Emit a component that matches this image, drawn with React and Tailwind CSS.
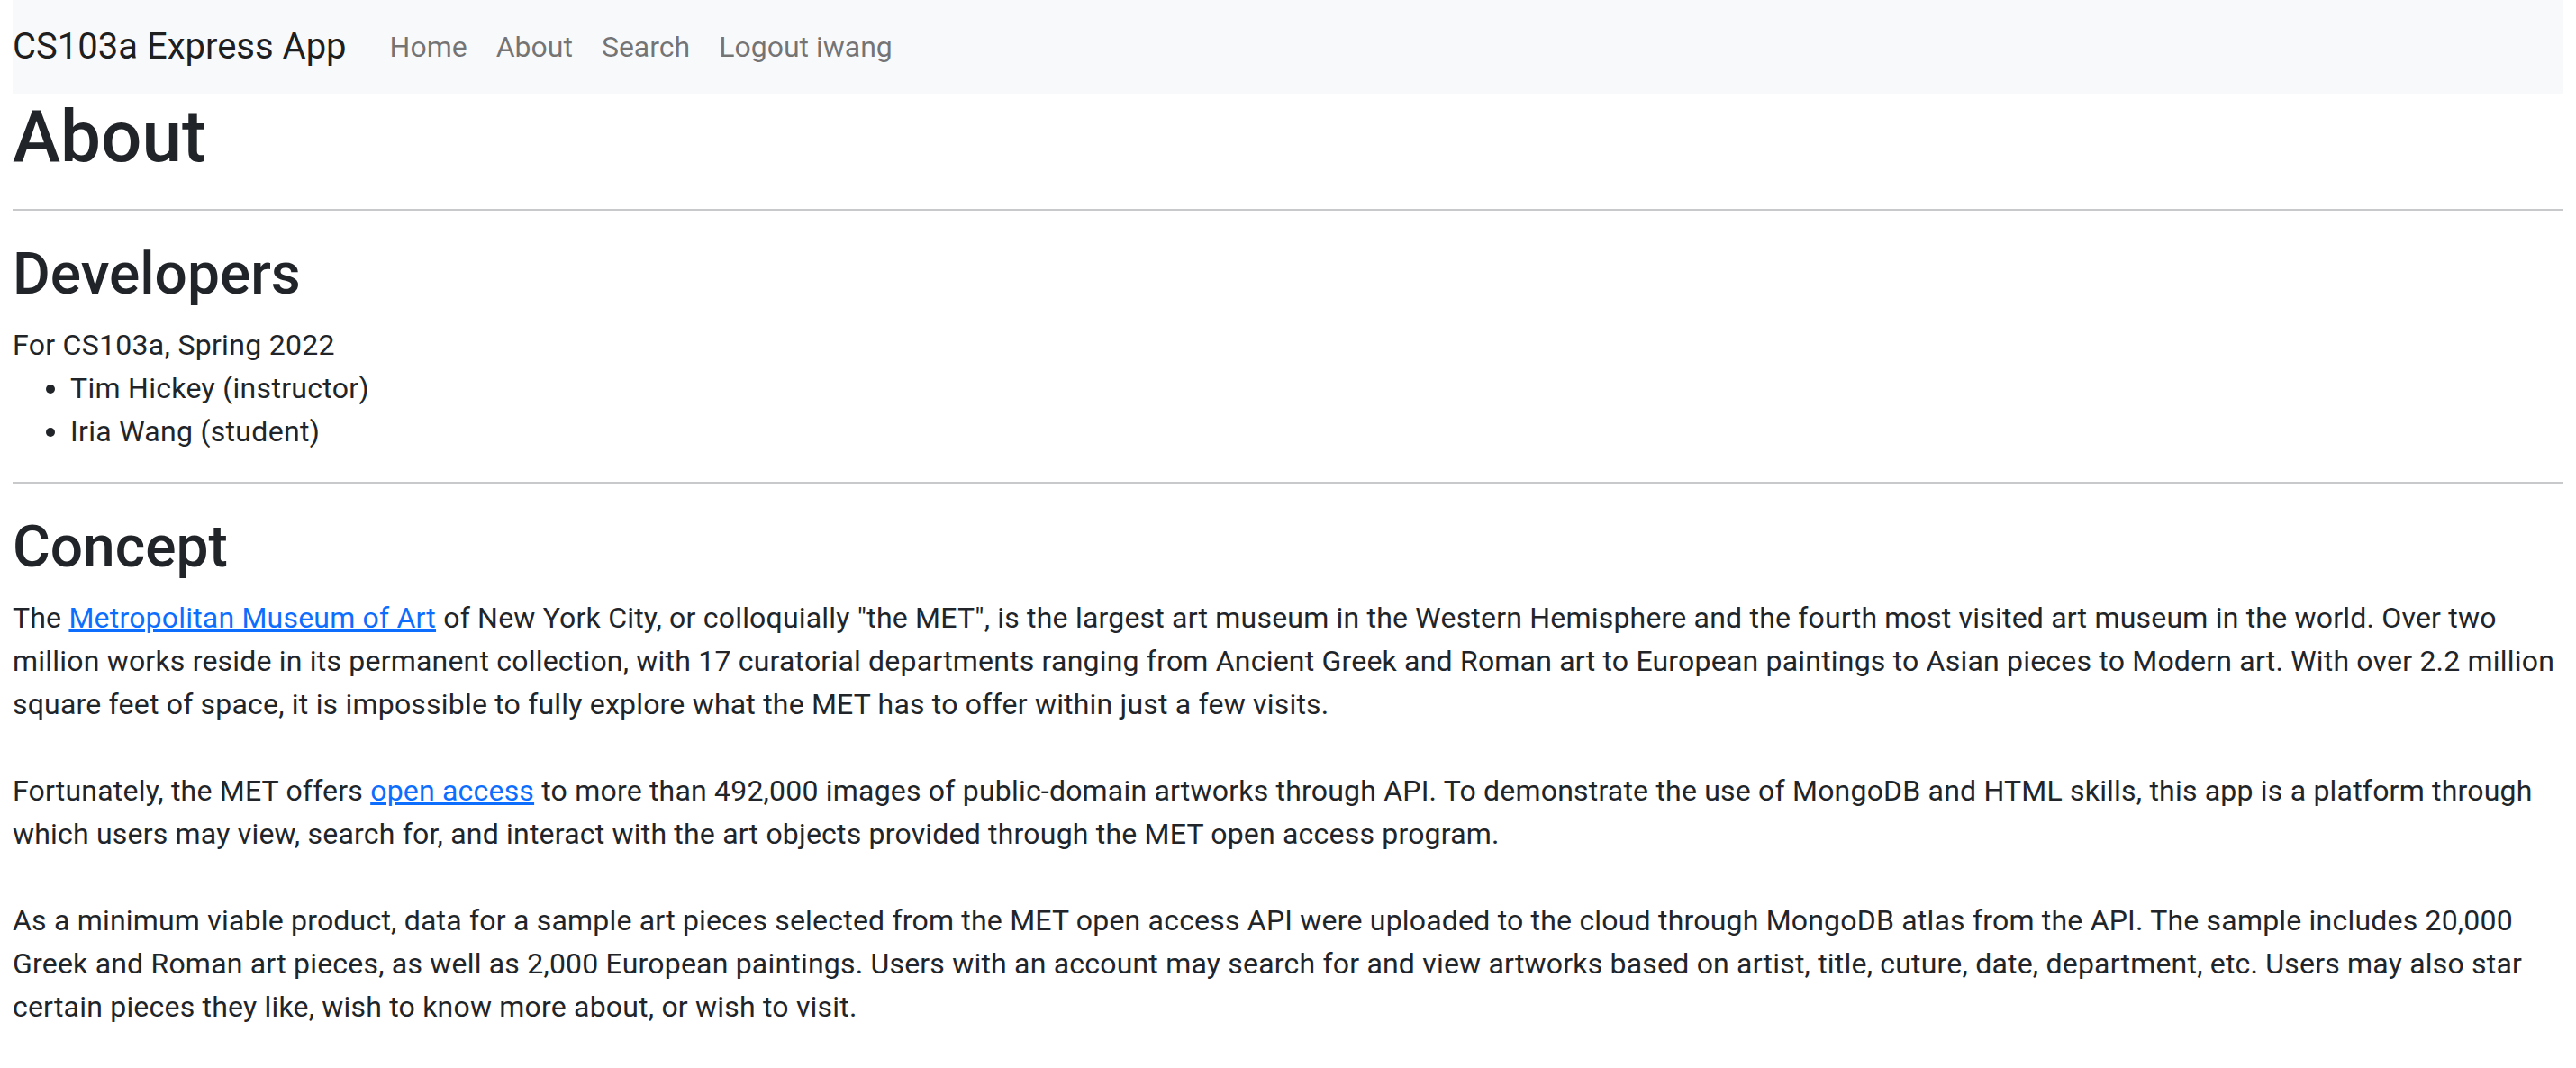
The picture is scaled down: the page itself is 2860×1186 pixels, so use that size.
import React from "react";

const navLinks = ["Home", "About", "Search", "Logout iwang"];

function NavBar() {
  return (
    <nav className="flex h-[104px] items-center bg-[#f8f9fa]">
      <a href="#" className="mr-[32px] text-[40px] leading-[60px] text-black/90">
        CS103a Express App
      </a>
      <div className="flex items-center">
        {navLinks.map((label) => (
          <a
            key={label}
            href="#"
            className="px-[16px] text-[32px] leading-[48px] text-black/55"
          >
            {label}
          </a>
        ))}
      </div>
    </nav>
  );
}

export default function App() {
  return (
    <div
      className="min-h-screen bg-white px-[14px] text-[32px] leading-[48px] text-[#212529]"
      style={{ fontFamily: "Roboto, 'Noto Sans', sans-serif" }}
    >
      <NavBar />

      <h1 className="mb-[16px] text-[80px] font-medium leading-[96px]">About</h1>
      <hr className="my-[32px] border-t-2 border-[#c8c9ca]" />

      <h2 className="mb-[16px] text-[64px] font-medium leading-[77px]">Developers</h2>
      <div className="tracking-[0.3px]">
        <div>For CS103a, Spring 2022</div>
        <ul className="mb-[32px] list-disc pl-[64px]">
          <li>Tim Hickey (instructor)</li>
          <li>Iria Wang (student)</li>
        </ul>
      </div>
      <hr className="my-[32px] border-t-2 border-[#c8c9ca]" />

      <h2 className="mb-[16px] text-[64px] font-medium leading-[77px]">Concept</h2>
      <div className="tracking-[0.2px]">
        The{" "}
        <a href="#" className="text-[#0d6efd] underline">
          Metropolitan Museum of Art
        </a>{" "}
        of New York City, or colloquially "the MET", is the largest art museum in the
        Western Hemisphere and the fourth most visited art museum in the world. Over two
        million works reside in its permanent collection, with 17 curatorial departments
        ranging from Ancient Greek and Roman art to European paintings to Asian pieces to
        Modern art. With over 2.2 million square feet of space, it is impossible to fully
        explore what the MET has to offer within just a few visits.
        <br />
        <br />
        Fortunately, the MET offers{" "}
        <a href="#" className="text-[#0d6efd] underline">
          open access
        </a>{" "}
        to more than 492,000 images of public-domain artworks through API. To demonstrate
        the use of MongoDB and HTML skills, this app is a platform through which users may
        view, search for, and interact with the art objects provided through the MET open
        access program.
        <br />
        <br />
        As a minimum viable product, data for a sample art pieces selected from the MET
        open access API were uploaded to the cloud through MongoDB atlas from the API. The
        sample includes 20,000 Greek and Roman art pieces, as well as 2,000 European
        paintings. Users with an account may search for and view artworks based on artist,
        title, cuture, date, department, etc. Users may also star certain pieces they like,
        wish to know more about, or wish to visit.
      </div>
    </div>
  );
}
